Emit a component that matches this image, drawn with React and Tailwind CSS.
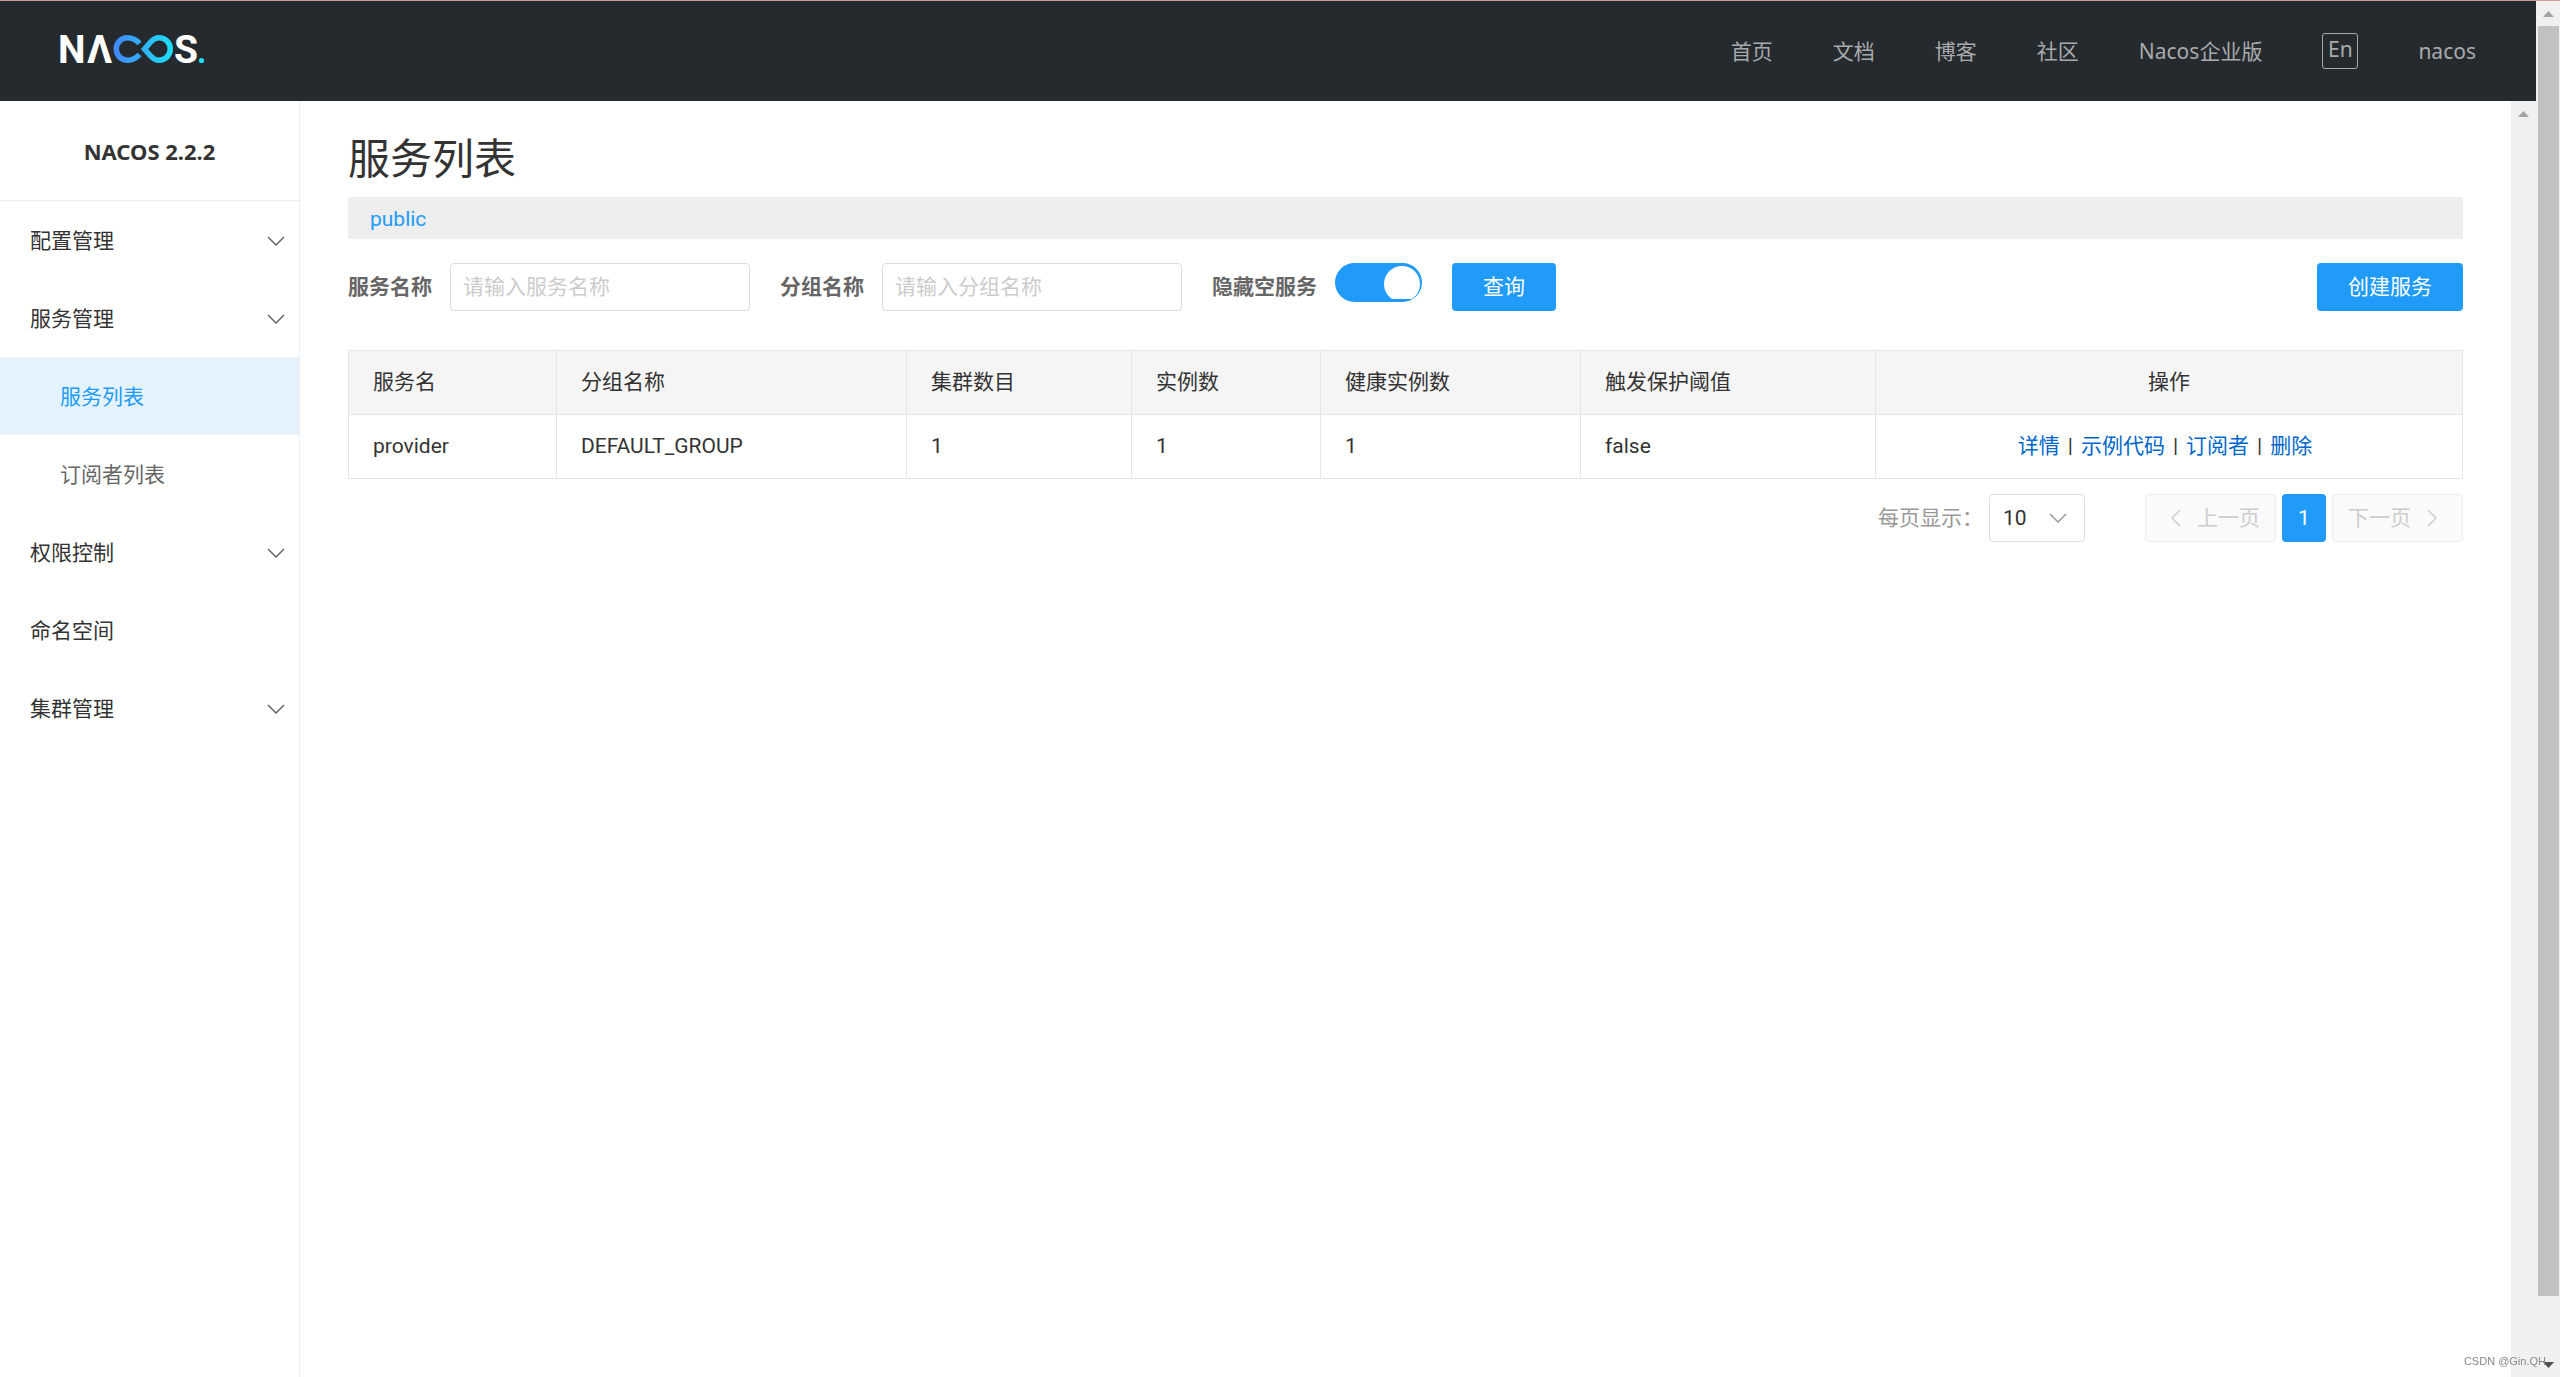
import { useState } from 'react';
import clsx from 'clsx';

const NAV_LINKS = ['首页', '文档', '博客', '社区', 'Nacos企业版'];

const MENU = [
  { name: '配置管理', expandable: true },
  {
    name: '服务管理',
    expandable: true,
    children: ['服务列表', '订阅者列表'],
  },
  { name: '权限控制', expandable: true },
  { name: '命名空间' },
  { name: '集群管理', expandable: true },
];

const COLUMNS = [
  { title: '服务名', width: 'w-[208px]' },
  { title: '分组名称', width: 'w-[350px]' },
  { title: '集群数目', width: 'w-[225px]' },
  { title: '实例数', width: 'w-[189px]' },
  { title: '健康实例数', width: 'w-[260px]' },
  { title: '触发保护阈值', width: 'w-[295px]' },
];

const SERVICES = [['provider', 'DEFAULT_GROUP', '1', '1', '1', 'false']];

const ACTIONS = ['详情', '示例代码', '订阅者', '删除'];

const Chevron = ({ className, d = 'M1 1l8 8 8-8', viewBox = '0 0 18 10' }) => (
  <svg
    className={className}
    viewBox={viewBox}
    fill="none"
    stroke="currentColor"
    strokeWidth="1.5"
    aria-hidden="true"
  >
    <path d={d} />
  </svg>
);

const Logo = () => (
  <svg className="-ml-1 h-12 w-[160px]" viewBox="-4 -8 160 48" role="img" aria-label="Nacos">
    <defs>
      <linearGradient id="loop" gradientUnits="userSpaceOnUse" x1="54" y1="0" x2="114" y2="0">
        <stop offset="0" stopColor="#4388fb" />
        <stop offset="1" stopColor="#1be1f8" />
      </linearGradient>
    </defs>
    <g className="font-['Roboto',sans-serif] text-[39px] font-bold" fill="#fff">
      <text x="-2" y="28">N</text>
      <text x="27" y="28">Λ</text>
      <text x="114" y="28">S</text>
    </g>
    <g fill="none" stroke="url(#loop)" strokeWidth="5.5">
      <path d="M79.5 8.5C76 4.5 72.5 2.75 67.5 2.75a11.25 11.25 0 0 0 0 22.500C72.5 25.250 76 23.5 79.5 19.500" />
      <path d="M84.500 14L91 6.700C93.500 4 96 2.75 99 2.75a11.25 11.25 0 0 1 0 22.500C96 25.250 93.500 24 91 21.300Z" />
    </g>
    <circle cx="141.5" cy="25.500" r="2.600" fill="#1be1f8" />
  </svg>
);

const Header = () => (
  <header className="flex h-[101px] items-center justify-between border-t border-[#d09a9a] bg-[#252a2f] px-[60px]">
    <a href="#home">
      <Logo />
    </a>
    <nav className="flex items-center gap-[60px] font-['Noto_Sans','Noto_Sans_CJK_SC',sans-serif] text-[#a8aaac]">
      {NAV_LINKS.map((name) => (
        <a key={name} href="#nav">
          {name}
        </a>
      ))}
      <button
        type="button"
        className="h-9 w-9 rounded-[3px] border border-[#a8aaac] pb-1 leading-7"
      >
        En
      </button>
      <a href="#user">nacos</a>
    </nav>
  </header>
);

const Sidebar = ({ current, onSelect }) => (
  <aside className="w-[300px] shrink-0 border-r border-[#eee]">
    <h1 className="flex h-[100px] items-center justify-center border-b border-[#eee] font-['Noto_Sans',sans-serif] text-[22px] font-bold">
      NACOS 2.2.2
    </h1>
    <ul>
      {MENU.map((item) => (
        <li key={item.name}>
          <button
            type="button"
            className="flex h-[78px] w-full items-center justify-between pt-[2px] pr-[14px] pl-[30px]"
          >
            {item.name}
            {item.expandable && <Chevron className="h-[10px] w-[18px] text-[#666]" />}
          </button>
          {item.children && (
            <ul>
              {item.children.map((child) => (
                <li key={child}>
                  <a
                    href="#service"
                    onClick={() => onSelect(child)}
                    className={clsx(
                      'flex h-[78px] items-center pt-[2px] pl-[60px]',
                      child === current ? 'bg-[#e4f3fe] text-[#209bfa]' : 'text-[#666]'
                    )}
                  >
                    {child}
                  </a>
                </li>
              ))}
            </ul>
          )}
        </li>
      ))}
    </ul>
  </aside>
);

const SearchField = ({ id, label }) => (
  <div className="flex items-center gap-[18px]">
    <label htmlFor={id} className="font-bold text-[#666]">
      {label}
    </label>
    <input
      id={id}
      type="text"
      placeholder={`请输入${label}`}
      className="h-12 w-[300px] rounded-[4px] border border-[#dcdee3] px-3 placeholder:text-[#ccc]"
    />
  </div>
);

const SearchBar = () => {
  const [hideEmpty, setHideEmpty] = useState(true);

  return (
    <form className="mt-6 flex items-center gap-[30px]" onSubmit={(e) => e.preventDefault()}>
      <SearchField id="serviceName" label="服务名称" />
      <SearchField id="groupName" label="分组名称" />
      <div className="flex h-12 gap-[18px]">
        <label htmlFor="hideEmpty" className="self-center font-bold text-[#666]">
          隐藏空服务
        </label>
        <input
          id="hideEmpty"
          type="checkbox"
          role="switch"
          checked={hideEmpty}
          onChange={(e) => setHideEmpty(e.target.checked)}
          className="flex h-[39px] w-[87px] appearance-none rounded-full bg-[#ccc] px-[2px] pt-[3px] before:size-9 before:rounded-full before:bg-white before:[clip-path:inset(0_0_3px_0)] checked:justify-end checked:bg-[#209bfa]"
        />
      </div>
      <button type="submit" className="h-12 rounded-[4px] bg-[#209bfa] px-[31px] text-white">
        查询
      </button>
      <button
        type="button"
        className="ml-auto h-12 rounded-[4px] bg-[#209bfa] px-[31px] text-white"
      >
        创建服务
      </button>
    </form>
  );
};

const ServiceTable = () => (
  <table className="mt-[39px] w-full table-fixed border-collapse [&_td]:border [&_td]:border-[#e6e6e6] [&_th]:border [&_th]:border-[#e6e6e6]">
    <thead className="bg-[#f5f5f5]">
      <tr className="h-16">
        {COLUMNS.map((column) => (
          <th key={column.title} className={clsx('px-6 pb-[2px] text-left font-normal', column.width)}>
            {column.title}
          </th>
        ))}
        <th className="px-6 pb-[2px] text-center font-normal">操作</th>
      </tr>
    </thead>
    <tbody>
      {SERVICES.map((row) => (
        <tr key={row[0]} className="h-16">
          {row.map((value, i) => (
            <td key={COLUMNS[i].title} className="px-6 pb-[2px]">
              {value}
            </td>
          ))}
          <td className="pr-8 pb-[2px] pl-6 text-center">
            {ACTIONS.map((action, i) => (
              <span key={action}>
                {i > 0 && <span className="mx-2">|</span>}
                <a href="#action" className="text-[#0066cc]">
                  {action}
                </a>
              </span>
            ))}
          </td>
        </tr>
      ))}
    </tbody>
  </table>
);

const Pagination = () => (
  <div className="mt-[15px] flex items-center justify-end gap-[6px]">
    <label htmlFor="pageSize" className="text-[#999]">
      每页显示：
    </label>
    <div className="relative mr-[54px]">
      <select
        id="pageSize"
        defaultValue="10"
        className="h-12 w-24 appearance-none rounded-[4px] border border-[#dcdee3] pl-[13px]"
      >
        <option>10</option>
        <option>20</option>
        <option>50</option>
      </select>
      <Chevron className="pointer-events-none absolute top-[19px] right-[18px] h-[10px] w-[18px] text-[#999]" />
    </div>
    <button
      type="button"
      disabled
      className="flex h-12 items-center gap-4 rounded-[4px] border border-[#eee] bg-[#fafafa] pr-[15px] pl-[25px] text-[#ccc]"
    >
      <Chevron className="h-[18px] w-[10px]" viewBox="0 0 10 18" d="M9 1L1 9l8 8" />
      上一页
    </button>
    <button type="button" className="h-12 w-11 rounded-[4px] bg-[#209bfa] text-white">
      1
    </button>
    <button
      type="button"
      disabled
      className="flex h-12 items-center gap-4 rounded-[4px] border border-[#eee] bg-[#fafafa] pr-[25px] pl-[15px] text-[#ccc]"
    >
      下一页
      <Chevron className="h-[18px] w-[10px]" viewBox="0 0 10 18" d="M1 1l8 8-8 8" />
    </button>
  </div>
);

const ArrowUp = () => (
  <svg className="h-[6px] w-[11px] text-[#a3a3a3]" viewBox="0 0 11 6" aria-hidden="true">
    <path d="M0 6L5.500 0 11 6z" fill="currentColor" />
  </svg>
);

const App = () => {
  const [current, setCurrent] = useState('服务列表');

  return (
    <div className="flex min-h-screen bg-white font-['Roboto','Noto_Sans_CJK_SC',sans-serif] text-[21px] leading-[30px] text-[#333]">
      <div className="flex min-w-0 flex-1 flex-col">
        <Header />
        <div className="flex flex-1">
          <Sidebar current={current} onSelect={setCurrent} />
          <main className="min-w-0 flex-1 px-12 pt-8">
            <h2 className="text-[42px] leading-[54px]">{current}</h2>
            <div className="mt-[10px] flex h-[42px] items-center bg-[#eee] pt-[2px] pl-[22px]">
              <a href="#public" className="text-[#209bfa]">
                public
              </a>
            </div>
            <SearchBar />
            <ServiceTable />
            <Pagination />
          </main>
          <div className="flex w-[25px] justify-center bg-[#f0f0f0] pt-[10px]">
            <ArrowUp />
          </div>
        </div>
      </div>
      <div className="flex w-6 flex-col items-center border-t border-[#d09a9a] bg-[#f0f0f0] pt-[10px] pb-[9px]">
        <ArrowUp />
        <div className="mt-[9px] mb-[66px] w-[21px] flex-1 bg-[#c1c1c1]" />
        <svg className="h-[6px] w-[11px] text-[#505050]" viewBox="0 0 11 6" aria-hidden="true">
          <path d="M0 0h11L5.500 6z" fill="currentColor" />
        </svg>
      </div>
      <p className="fixed right-[14px] bottom-2 font-['Liberation_Sans',sans-serif] text-[11px] leading-4 text-[#888]">
        CSDN @Gin.QH
      </p>
    </div>
  );
};

export default App;
